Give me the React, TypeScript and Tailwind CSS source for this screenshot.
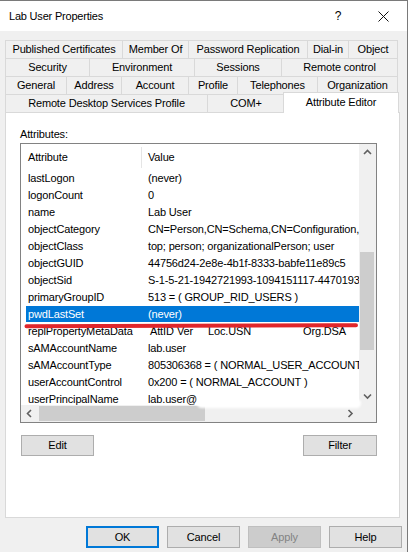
import React from "react";

const rows: [string, string][] = [
  ["lastLogon", "(never)"],
  ["logonCount", "0"],
  ["name", "Lab User"],
  ["objectCategory", "CN=Person,CN=Schema,CN=Configuration,DC=lab,DC=local"],
  ["objectClass", "top; person; organizationalPerson; user"],
  ["objectGUID", "44756d24-2e8e-4b1f-8333-babfe11e89c5"],
  ["objectSid", "S-1-5-21-1942721993-1094151117-4470193-1105"],
  ["primaryGroupID", "513 = ( GROUP_RID_USERS )"],
  ["pwdLastSet", "(never)"],
  ["replPropertyMetaData", "__META__"],
  ["sAMAccountName", "lab.user"],
  ["sAMAccountType", "805306368 = ( NORMAL_USER_ACCOUNT )"],
  ["userAccountControl", "0x200 = ( NORMAL_ACCOUNT )"],
  ["userPrincipalName", "lab.user@"],
];

function Tab({ w, label, first }: { w: string; label: string; first?: boolean }) {
  return (
    <div
      className={`${w} h-[18px] shrink-0 border-t border-r border-[#d9d9d9] ${first ? "border-l" : ""} bg-[#f0f0f0] flex items-center justify-center whitespace-nowrap leading-[17px]`}
    >
      {label}
    </div>
  );
}

function Chevron({ dir }: { dir: "up" | "down" | "left" | "right" }) {
  const d =
    dir === "up"
      ? "M1 5 L4.5 1.5 L8 5"
      : dir === "down"
      ? "M1 1.5 L4.5 5 L8 1.5"
      : dir === "left"
      ? "M5 1 L1.5 4.5 L5 8"
      : "M1.5 1 L5 4.5 L1.5 8";
  const w = dir === "up" || dir === "down" ? 9 : 7;
  const h = dir === "up" || dir === "down" ? 7 : 9;
  return (
    <svg width={w} height={h} viewBox={`0 0 ${w} ${h}`}>
      <path d={d} fill="none" stroke="#606060" strokeWidth="1.6" />
    </svg>
  );
}

function Btn({ label, w, cls }: { label: string; w: string; cls?: string }) {
  return (
    <div
      className={`${w} flex items-center justify-center ${cls ?? "bg-[#e1e1e1] border border-[#adadad] text-black"}`}
    >
      {label}
    </div>
  );
}

export default function App() {
  return (
    <div className="w-[411px] h-[552px] bg-white overflow-hidden font-['Liberation_Sans',Arial,sans-serif] text-[11px] tracking-[-0.15px] text-black">
      <div className="w-[408px] h-[552px] border-t border-r border-[#7a7a7a] bg-[#f0f0f0] flex flex-col">
        {/* title bar */}
        <div className="h-[30px] bg-white flex items-center shrink-0">
          <div className="pl-[9px] text-[11px] tracking-[-0.2px] flex-1">Lab User Properties</div>
          <div className="w-[10px] text-[12px] mr-[35px] text-center">?</div>
          <svg width="11" height="11" viewBox="0 0 11 11" className="mr-[18px]">
            <path d="M0.5 0.5 L10.5 10.5 M10.5 0.5 L0.5 10.5" stroke="#111" strokeWidth="1" />
          </svg>
        </div>

        {/* body */}
        <div className="pt-[9px] pl-[5px] pr-[7px] flex flex-col">
          <div className="flex flex-col">
            <div className="flex">
              <Tab w="w-[118px]" label="Published Certificates" first />
              <Tab w="w-[66px]" label="Member Of" />
              <Tab w="w-[119px]" label="Password Replication" />
              <Tab w="w-[41px]" label="Dial-in" />
              <Tab w="w-[49px]" label="Object" />
            </div>
            <div className="flex">
              <Tab w="w-[85px]" label="Security" first />
              <Tab w="w-[105px]" label="Environment" />
              <Tab w="w-[87px]" label="Sessions" />
              <Tab w="w-[116px]" label="Remote control" />
            </div>
            <div className="flex">
              <Tab w="w-[62px]" label="General" first />
              <Tab w="w-[55px]" label="Address" />
              <Tab w="w-[67px]" label="Account" />
              <Tab w="w-[49px]" label="Profile" />
              <Tab w="w-[80px]" label="Telephones" />
              <Tab w="w-[80px]" label="Organization" />
            </div>
            <div className="flex h-[18px] items-start">
              <Tab w="w-[203px]" label="Remote Desktop Services Profile" first />
              <Tab w="w-[77px]" label="COM+" />
              <div className="relative z-10 -mt-[2px] -ml-[2px] w-[116px] h-[21px] shrink-0 bg-white border-t border-l border-r border-[#d9d9d9] flex justify-center pt-[3px] leading-[13px] whitespace-nowrap">
                Attribute Editor
              </div>
            </div>
          </div>

          {/* panel */}
          <div className="w-[395px] h-[406px] bg-white border border-[#d9d9d9] pt-[14px] pl-[14px] flex flex-col">
            <div className="h-[13px] leading-[13px] mt-px">Attributes:</div>
            <div className="relative mt-[2px] w-[357px] h-[280px] border border-[#828282] bg-white flex flex-col">
              <div className="flex h-[261px]">
                {/* list */}
                <div className="w-[338px] h-[261px] overflow-hidden flex flex-col">
                  <div className="h-[26px] shrink-0 flex items-center">
                    <div className="w-[120px] h-[26px] shrink-0 pl-[7px] flex items-center">Attribute</div>
                    <div className="w-px h-[21px] bg-[#e5e5e5]" />
                    <div className="pl-[6px]">Value</div>
                  </div>
                  {rows.map(([a, v]) => {
                    const sel = a === "pwdLastSet";
                    return (
                      <div key={a} className="h-[17px] shrink-0 flex whitespace-nowrap">
                        <div
                          className={`ml-[5px] flex h-[16px] leading-[16px] w-[600px] shrink-0 ${sel ? "bg-[#0078d7] text-white" : ""}`}
                        >
                          <div className="w-[115px] shrink-0 pl-[2px] overflow-hidden">{a}</div>
                          <div className="pl-[7px]">
                            {v === "__META__" ? (
                              <span className="flex pl-[2px]">
                                <span className="w-[27px] shrink-0">AttID</span>
                                <span className="w-[31px] shrink-0">Ver</span>
                                <span className="w-[95px] shrink-0">Loc.USN</span>
                                <span>Org.DSA</span>
                              </span>
                            ) : (
                              v
                            )}
                          </div>
                        </div>
                      </div>
                    );
                  })}
                </div>
                {/* vertical scrollbar */}
                <div className="w-[17px] h-[261px] bg-[#f0f0f0] flex flex-col items-center">
                  <div className="h-[17px] flex items-center justify-center">
                    <Chevron dir="up" />
                  </div>
                  <div className="flex-1 w-full px-[1px]">
                    <div className="mt-[91px] h-[98px] w-[14px] bg-[#cdcdcd]" />
                  </div>
                  <div className="h-[17px] flex items-center justify-center">
                    <Chevron dir="down" />
                  </div>
                </div>
              </div>
              {/* horizontal scrollbar */}
              <div className="flex h-[17px]">
                <div className="w-[338px] h-[17px] bg-[#f0f0f0] flex items-center">
                  <div className="w-[17px] flex justify-center">
                    <Chevron dir="left" />
                  </div>
                  <div className="ml-px w-[166px] h-[15px] bg-[#cdcdcd]" />
                  <div className="flex-1" />
                  <div className="w-[17px] flex justify-center">
                    <Chevron dir="right" />
                  </div>
                </div>
                <div className="w-[17px] h-[17px] bg-[#f0f0f0]" />
              </div>

              {/* redaction smear */}
              <div className="absolute left-[176px] top-[255px] w-[164px] h-[9px] bg-white rounded-[6px] blur-[1px]" />
              {/* red annotation */}
              <svg className="absolute left-0 top-0 pointer-events-none" width="357" height="280">
                <path d="M5.5 182.2 C 60 181.5, 200 181, 335 181.2" fill="none" stroke="#e0262b" strokeWidth="4" strokeLinecap="round" />
              </svg>
            </div>
            <div className="mt-[12px] w-[357px] flex justify-between">
              <Btn label="Edit" w="ml-px w-[73px] h-[21px]" />
              <Btn label="Filter" w="w-[74px] h-[21px]" />
            </div>
          </div>

          {/* bottom buttons */}
          <div className="mt-[8px] -mr-[2px] flex justify-end gap-[8px]">
            <Btn label="OK" w="w-[73px] h-[22px]" cls="bg-[#e1e1e1] border-2 border-[#0078d7]" />
            <Btn label="Cancel" w="w-[73px] h-[22px]" />
            <Btn label="Apply" w="w-[73px] h-[22px]" cls="bg-[#cccccc] border border-[#bfbfbf] text-[#838383]" />
            <Btn label="Help" w="w-[73px] h-[22px]" />
          </div>
        </div>
      </div>
    </div>
  );
}
